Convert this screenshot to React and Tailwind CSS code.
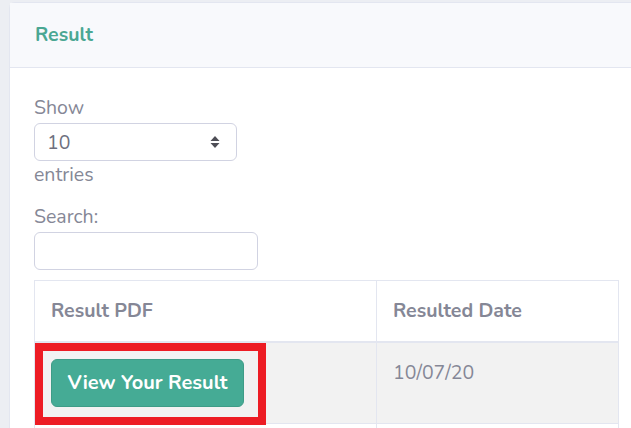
export default function App() {
  const font = { fontFamily: '"Nunito", "Open Sans", sans-serif' }
  return (
    <div className="h-[428px] w-[631px] overflow-hidden bg-[#eceef3] pl-[9px] pt-[2px]" style={font}>
      <div className="w-[700px] rounded-tl-[6px] border border-[#e3e6f0] bg-white">
        <div className="flex h-[65px] items-center border-b border-[#e3e6f0] bg-[#f8f9fc] pl-[25px]">
          <h6 className="text-[19.5px] font-bold text-[#4aa793]">Result</h6>
        </div>
        <div className="pl-[24px] pt-[28px] text-[19.5px] leading-[27px] text-[#858796]">
          <div className="-mt-[2px] pb-[2px]">Show</div>
          <div className="flex h-[38px] w-[203px] items-center justify-between rounded-[6px] border border-[#d1d3e2] pl-[12px] pr-[16px] text-[#6e707e]">
            <span>10</span>
            <svg width="10" height="14" viewBox="0 0 10 14">
              <path d="M5 1 L9.5 6 L0.5 6 Z" fill="#4e4e56" />
              <path d="M5 13 L9.5 8 L0.5 8 Z" fill="#4e4e56" />
            </svg>
          </div>
          <div>entries</div>
          <div className="mt-[15px]">Search:</div>
          <input className="mt-[2px] block h-[38px] w-[224px] rounded-[6px] border border-[#d1d3e2] bg-white" />
          <table className="mt-[10px] w-[585px] border-collapse">
            <thead>
              <tr>
                <th className="h-[61px] w-[342px] border border-b-2 border-[#e3e6f0] pl-[16px] text-left font-bold">Result PDF</th>
                <th className="h-[61px] border border-b-2 border-[#e3e6f0] pl-[16px] text-left font-bold">Resulted Date</th>
              </tr>
            </thead>
            <tbody>
              <tr className="bg-[#f2f2f2]">
                <td className="relative h-[80px] border border-[#e3e6f0] p-[16px] align-top">
                  <button className="h-[48px] w-[193px] rounded-[6px] border border-[#3e9c87] bg-[#45ab95] text-[20px] font-bold text-white">
                    View Your Result
                  </button>
                  <div className="absolute left-0 top-0 h-[82px] w-[231px] border-[8px] border-[#ed1c24]" />
                </td>
                <td className="h-[80px] border border-[#e3e6f0] pl-[16px] pt-[16px] align-top">10/07/20</td>
              </tr>
              <tr>
                <td className="h-[60px] border border-[#e3e6f0]" />
                <td className="h-[60px] border border-[#e3e6f0]" />
              </tr>
            </tbody>
          </table>
        </div>
      </div>
    </div>
  )
}
